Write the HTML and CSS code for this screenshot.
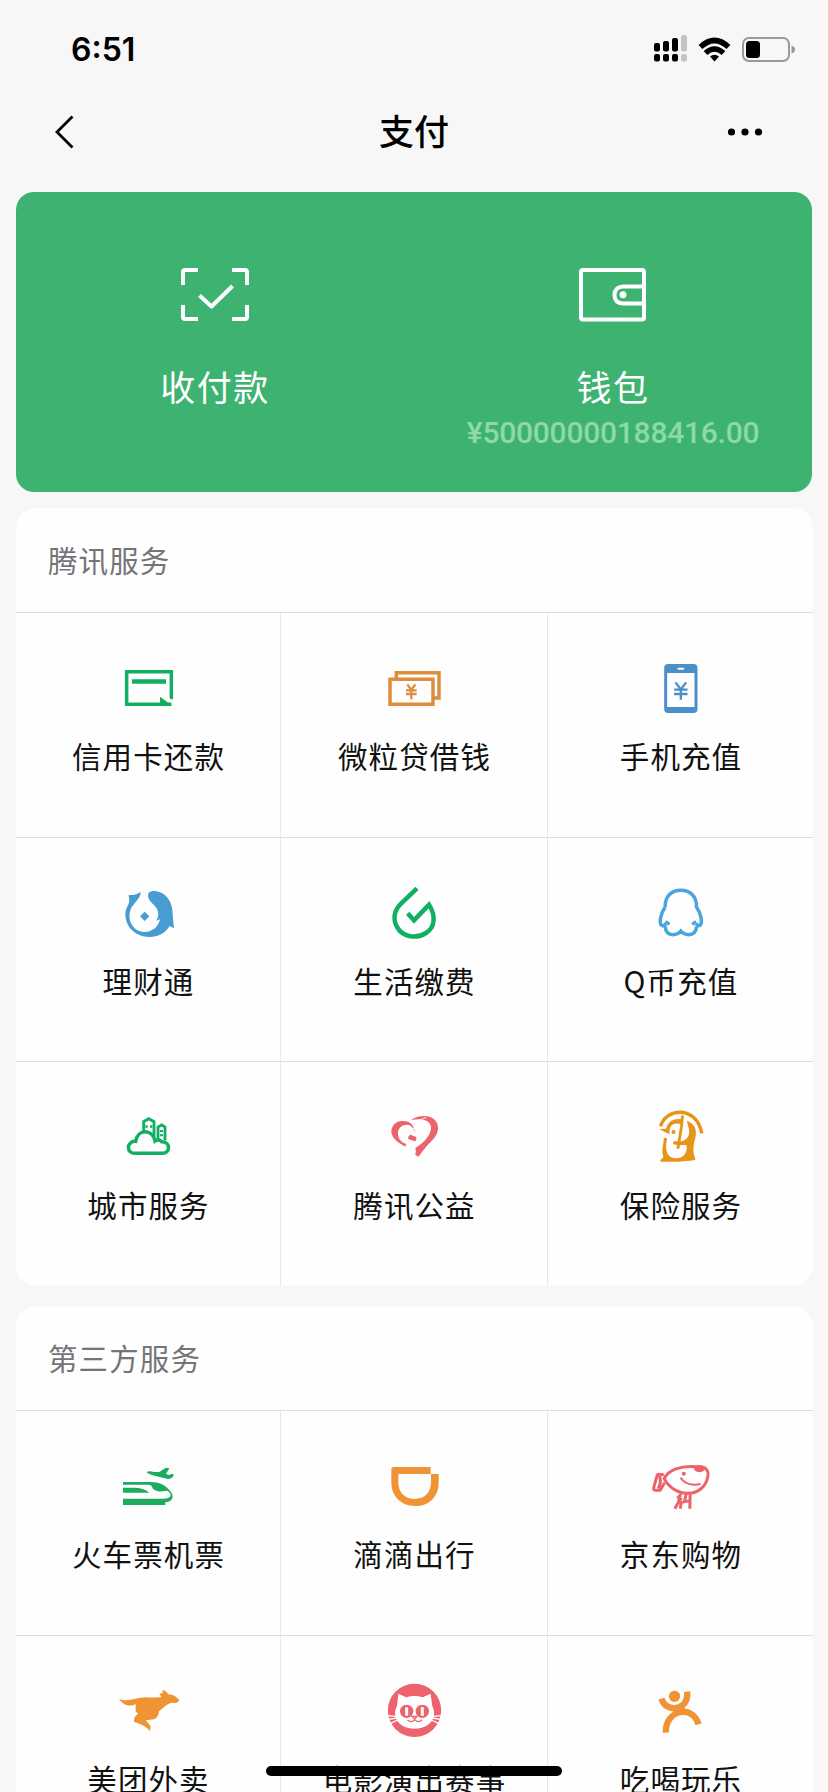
FILE: index.html
```html
<!DOCTYPE html>
<html lang="zh-CN">
<head>
<meta charset="utf-8">
<title>支付</title>
<link rel="stylesheet" href="styles.css">
</head>
<body>
<div class="screen">
  <header class="status">
    <span class="time">6:51</span>
    <svg class="status-icons" viewBox="652 32 144 34">
      <g fill="#000"><rect x="653" y="43" width="6" height="8.500" rx="2"/><rect x="662" y="41" width="6" height="10.500" rx="2"/><rect x="671" y="38" width="6" height="13.500" rx="2"/><rect x="653" y="54" width="6" height="7.500" rx="2"/><rect x="662" y="54" width="6" height="7.500" rx="2"/><rect x="671" y="54" width="6" height="7.500" rx="2"/></g>
      <g fill="#c4c4c4"><rect x="680" y="35" width="6" height="16.500" rx="2"/><rect x="680" y="54" width="6" height="7.500" rx="2"/></g>
      <g fill="none" stroke="#000" stroke-width="5.500"><path d="M699.500 47Q713.500 34 727.500 47"/><path d="M704.500 53Q713.500 45 722.500 53"/></g>
      <path d="M709 56.500Q713.500 53 718 56.500L713.500 61.500Z"/>
      <rect x="742" y="38" width="46" height="23" rx="6" fill="none" stroke="#999" stroke-width="2"/><rect x="745" y="41" width="14" height="17" rx="3.500"/><path d="M790.500 45.500Q794 46.500 794 49.500T790.500 53.500Z" fill="#999"/>
    </svg>
  </header>
  <nav class="nav">
    <svg class="back" viewBox="0 0 24 38"><path d="M19.500 3.500L4 19L19.500 34.500"/></svg>
    <h1 class="title">支付</h1>
    <svg class="more" viewBox="0 0 36 10"><circle cx="4.500" cy="5" r="3.600"/><circle cx="18" cy="5" r="3.600"/><circle cx="31.500" cy="5" r="3.600"/></svg>
  </nav>
  <main class="content">
    <section class="hero">
      <div class="hero-item">
        <svg class="hero-icon" viewBox="0 0 72 60" fill="none" stroke="#fff" stroke-width="4"><path d="M4 20V7Q4 5 6 5H19M53 5H66Q68 5 68 7V20M68 40V52Q68 54 66 54H53M19 54H6Q4 54 4 52V40"/><path d="M20.500 30.500L32.500 41.500L53.500 21" stroke-linejoin="round"/></svg>
        <span class="hero-label">收付款</span>
      </div>
      <div class="hero-item">
        <svg class="hero-icon" viewBox="0 0 72 60" fill="none" stroke="#fff" stroke-width="4"><rect x="4" y="5" width="63" height="49.500" rx="2"/><path d="M66 21.500H46Q37.500 22 37.500 30T46 38.500H66"/><circle cx="46" cy="29.800" r="3.500" fill="#fff" stroke="none"/></svg>
        <span class="hero-label">钱包</span>
        <span class="amount">¥50000000188416.00</span>
      </div>
    </section>

    <section class="card">
      <h2 class="card-title">腾讯服务</h2>
      <div class="grid">
        <div class="cell"><svg class="icon green" viewBox="36 54 216 180"><path d="M214 178V95H80V193H214" class="line w9"/><path d="M96 118H198V131H96ZM180 170L217 197H180Z"/><path d="M201 173L221 187" stroke="#fff" stroke-width="6"/></svg><span>信用卡还款</span></div>
        <div class="cell"><svg class="icon gold" viewBox="834 54 216 180"><path d="M889 113V98H1017V174H1004M870 118H999V193H870Z" class="line w9"/><path d="M922 133L934 150L946 133M918 151H950M918 162H950M934 150V178" class="line w6"/></svg><span>微粒贷借钱</span></div>
        <div class="cell"><svg class="icon phone" viewBox="133.500 54 216 180"><path fill-rule="evenodd" d="M203 72H279Q291 72 291 84V207Q291 219 279 219H203Q191 219 191 207V84Q191 72 203 72ZM200 99V201H282V99ZM234 83Q230 84 230 86T234 89H248Q252 88 252 86T248 83Z"/><path d="M225 127L241 148L257 127M221 149H261M221 162H261M241 147V179" class="line w6"/></svg><span>手机充值</span></div>

        <div class="cell mid"><svg class="icon blue" viewBox="36 69 216 180"><path d="M86 105Q107 107 122 95C122 116 106 123 95 142C78 174 96 213 130 216C154 217 174 204 180 178L168 182Q177 170 174 155C169 133 144 128 144 106Q145 94 158 93C194 92 219 122 218 164L222 205L209 198C196 220 173 231 149 231C105 231 75 200 76 160C77 144 87 134 88 123Z"/><path d="M134 155L148 169L134 183L120 169Z"/></svg><span>理财通</span></div>
        <div class="cell mid"><svg class="icon green" viewBox="834 69 216 180"><path d="M951 85L903 131C879 154 879 182 893 204C909 231 949 238 978 219C1004 203 1009 169 987 134L942 181L923 160" class="line w12"/></svg><span>生活缴费</span></div>
        <div class="cell mid"><svg class="icon sky" viewBox="133.500 729 216 180"><path d="M194 801C193 770 212 751 241 751S289 770 288 801C302 822 306 845 300 855Q295 861 287 852M194 801C180 822 176 845 182 855Q188 861 196 852M194 860Q196 884 217 884Q232 884 241 873Q250 884 265 884Q286 884 288 860M195 845L207 853M287 845L275 853" class="line w9"/></svg><span>Q币充值</span></div>

        <div class="cell"><svg class="icon green" viewBox="36 51 216 180"><path d="M107 190C78 192 78 153 107 154C113 116 157 116 165 153C174 147 181 150 185 155C213 155 211 191 187 190Z" class="line w9"/><path d="M131 126V95L146 86L162 95V144M174 150V111L185 105L195 111V151" class="line w8"/><path d="M136 106H143V113H136ZM150 106H157V113H150ZM180 120H189V126H180ZM180 133H189V139H180Z"/></svg><span>城市服务</span></div>
        <div class="cell"><svg class="icon red" viewBox="834 51 216 180"><path d="M933 91C949 77 979 74 997 84C1018 96 1020 124 1002 145Q978 169 955 200L946 194L948 180Q945 178 946 174C971 159 995 134 993 110C990 88 958 83 933 91Z"/><path d="M944 128C944 104 928 91 906 93C885 94 873 110 874 127C877 146 895 160 917 170Q915 164 920 163C900 156 893 143 894 127C897 107 918 99 933 108Q941 115 944 128Z"/><path d="M931 134L947 140Q952 148 945 154L925 147Q923 138 931 134Z"/><path d="M940 118C943 105 954 91 979 82" class="line w3"/></svg><span>腾讯公益</span></div>
        <div class="cell"><svg class="icon amber" viewBox="133.500 51 216 180"><path d="M180 109C196 54 287 44 304 130" class="line w9"/><path d="M246 76L243 110L232 176" class="line w8"/><path d="M219 154H234C254 155 265 142 266 128C266 111 261 103 259 92C282 101 290 117 285 142C279 164 275 185 284 204V210Q247 217 180 215V210L189 201C181 181 190 161 190 143L200 145C192 178 199 205 225 205C253 206 263 181 257 165L236 166L218 163ZM177 117L197 116C202 95 219 84 242 88L241 102C220 96 208 105 207 124V132Q188 125 177 117Z"/><circle cx="219" cy="126" r="6"/></svg><span>保险服务</span></div>
      </div>
    </section>

    <section class="card">
      <h2 class="card-title">第三方服务</h2>
      <div class="grid">
        <div class="cell"><svg class="icon train" viewBox="36 48 216 180"><path d="M69 126H154C179 126 193 135 204 146C225 164 222 184 196 187V195H69V176H187C209 177 219 167 207 156Q202 151 195 153C180 157 158 153 155 138Q151 134 145 134H69ZM69 143H101Q131 143 148 158H69Z"/><path d="M139 96Q150 92 161 96H178L195 85Q201 82 208 85L198 102L208 105L216 101L222 104Q216 117 204 117L167 108Q147 104 139 96Z"/></svg><span>火车票机票</span></div>
        <div class="cell"><svg class="icon orange" viewBox="834 48 216 180"><path fill-rule="evenodd" d="M882 81H992V102H1016V128C1016 170 987 198 946 198C902 198 874 168 874 127V89Q874 81 882 81ZM895 102V127C895 158 914 177 944 177C975 177 993 157 993 127V102Z"/></svg><span>滴滴出行</span></div>
        <div class="cell"><svg class="icon red" viewBox="133.500 48 216 180"><path d="M191 116C204 89 240 77 285 80C316 77 329 91 320 118C313 142 291 159 264 160C231 162 202 138 191 116ZM190 104L176 103Q171 102 169 109L160 142Q157 151 166 151H179L192 128M177 108Q184 127 173 145M240 162L234 186L223 206M230 169L244 180M257 162L252 185L242 188L239 206M269 162L268 206M254 184H268" class="line w7"/><path d="M281 82H316Q312 94 302 96Q287 98 281 90Z"/><circle cx="250" cy="101" r="6"/><path d="M240 113C252 131 275 138 300 132" class="line w5"/></svg><span>京东购物</span></div>

        <div class="cell mid"><svg class="icon orange" viewBox="36 63 216 180"><path d="M57 116C83 129 109 111 140 112Q163 114 184 111L178 101L188 99L187 91Q198 90 204 103C218 102 229 110 238 120Q234 131 216 128C200 131 190 144 177 154Q176 171 162 178L137 181L152 198L150 213C141 202 125 192 102 186L103 173L114 160L107 155V132C93 141 70 138 57 116Z"/></svg><span>美团外卖</span></div>
        <div class="cell mid"><svg class="icon red" viewBox="834 63 216 180"><circle cx="943.500" cy="151" r="80"/><path fill="#fff" d="M895 101L919 112Q943 104 968 112L992 101L997 139Q1008 157 997 181C974 215 913 215 890 181Q880 159 891 138Z"/><ellipse cx="920" cy="154" rx="20" ry="20"/><ellipse cx="967" cy="154" rx="20" ry="20"/><path d="M918 144H922V165H918ZM965 144H969V165H965Z" fill="none" stroke="#fff" stroke-width="5"/><path d="M936 169H951L944 177ZM944 174V180M944 179Q934 190 922 180M944 179Q954 190 966 180" class="line w4"/><path d="M863 167L888 169M866 178L890 174M872 190L893 180M1024 167L999 169M1021 178L997 174M1015 190L994 180" stroke="#fff" stroke-width="4"/></svg><span>电影演出赛事</span></div>
        <div class="cell mid"><svg class="icon orange" viewBox="133.500 723 216 180"><circle cx="222" cy="769" r="17"/><path d="M183 776C191 805 224 812 246 796Q263 782 260 755M196 878C193 811 276 790 294 853" class="line w18"/><path d="M211 803H256L225 827Z"/></svg><span>吃喝玩乐</span></div>
      </div>
    </section>
  </main>
  <div class="home-bar"></div>
</div>
</body>
</html>
```

FILE: styles.css
```css
* { box-sizing: border-box; }
body { margin: 0; background: #f7f7f7; font-family: "Liberation Sans", "Noto Sans CJK SC", sans-serif; color: #111; }
.screen { width: 828px; height: 1792px; overflow: hidden; position: relative; }
svg { display: block; flex: none; }
.status { height: 100px; padding: 0 31px 0 71px; display: flex; justify-content: space-between; }
.time { font: 600 32px/40px Inter, sans-serif; color: #000; margin-top: 30px; }
.status-icons { width: 144px; height: 34px; margin-top: 32px; }
.nav { height: 92px; padding: 0 65px 28px 53px; display: grid; grid-template-columns: 100px 1fr 88px; align-items: center; }
.back { width: 24px; height: 38px; fill: none; stroke: #000; stroke-width: 2.8; }
.title { margin: -4px 0 0; text-align: center; font: 500 35px/50px "Noto Sans CJK SC", sans-serif; color: #000; }
.more { width: 36px; height: 10px; justify-self: end; }
.content { padding: 0 15px 0 16px; }
.hero { width: 796px; height: 300px; border-radius: 18px; background: #3eb371; display: grid; grid-template-columns: 1fr 1fr; }
.hero-item { display: flex; flex-direction: column; align-items: center; padding-top: 73px; color: #fff; }
.hero-icon { width: 72px; height: 60px; }
.hero-label { margin-top: 36px; font: 400 35px/50px "Noto Sans CJK SC", sans-serif; letter-spacing: 1.500px; }
.amount { font: 500 30px/36px Roboto, sans-serif; letter-spacing: -.25px; color: #8dd9ac; margin-top: 4px; }
.card { margin-top: 16px; border-radius: 20px; background: #fefefe; overflow: hidden; }
.card + .card { margin-top: 20px; }
.card-title { margin: 0; height: 104px; padding: 0 0 0 32px; font: 400 29.500px/102px "Noto Sans CJK SC", sans-serif; letter-spacing: 1.100px; color: #747478; }
.grid { display: grid; grid-template-columns: 265px 267px 265px; }
.cell { height: 225px; padding-top: 45px; border-top: 1px solid #dedede; border-right: 1px solid #e8e8e8; display: flex; flex-direction: column; align-items: center; font: 400 29.500px/42px "Noto Sans CJK SC", sans-serif; letter-spacing: 1.100px; color: #111; }
.cell.mid { height: 224px; }
.cell:nth-child(3n) { border-right: 0; }
.cell span { margin: 15.500px 0 0 1px; }
.icon { width: 72px; height: 60px; }
.line { fill: none; stroke: currentColor; }
.w3 { stroke: #fff; stroke-width: 3; }
.w4 { stroke-width: 4; }
.w5 { stroke-width: 6; }
.w6 { stroke-width: 7; }
.w7 { stroke-width: 9; }
.w8 { stroke-width: 8.500; }
.w9 { stroke-width: 10.500; }
.w12 { stroke-width: 13.500; }
.w18 { stroke-width: 19; }
.green { color: #12af63; fill: #12af63; }
.train { color: #1fab5d; fill: #1fab5d; }
.gold { color: #dc8e3d; fill: #dc8e3d; }
.phone { color: #4b8fc9; fill: #4b8fc9; }
.blue { color: #479dd2; fill: #479dd2; }
.sky { color: #4ba5dc; fill: #4ba5dc; }
.red { color: #ec636b; fill: #ec636b; }
.amber { color: #e7941b; fill: #e7941b; }
.orange { color: #f09335; fill: #f09335; }
.home-bar { position: absolute; left: 266px; top: 1766px; width: 296px; height: 10px; border-radius: 5px; background: #000; }
```
